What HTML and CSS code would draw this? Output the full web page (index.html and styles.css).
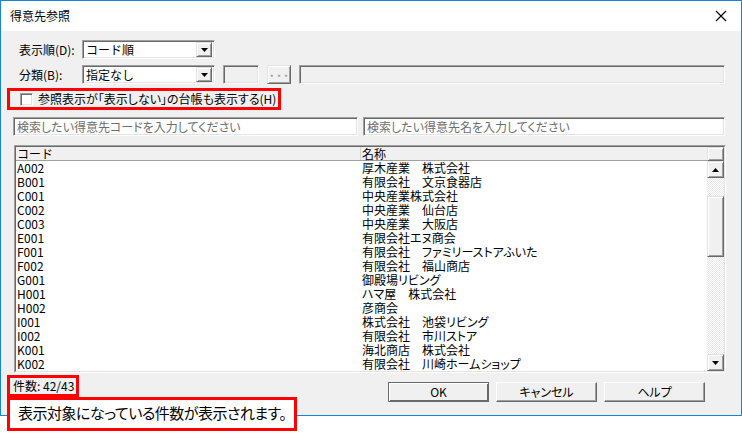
FILE: index.html
```html
<!DOCTYPE html>
<html lang="ja">
<head>
    <meta charset="UTF-8">
    <title>得意先参照</title>
    <link rel="stylesheet" href="styles.css">
</head>
<body>
    <div class="window">
        <!-- Title bar -->
        <div class="titlebar">
            <span class="title">得意先参照</span>
            <svg class="close" width="12" height="12" viewBox="0 0 12 12">
                <path d="M1 1 L11 11 M11 1 L1 11" stroke="#000" stroke-width="1.1" fill="none"/>
            </svg>
        </div>

        <div class="content">
            <div class="form-row">
                <span class="label">表示順(D):</span>
                <div class="select sunken">
                    <span class="select-text">コード順</span>
                    <span class="drop-btn raised"><svg width="7" height="4" viewBox="0 0 7 4"><path d="M0 0 H7 L3.5 4 Z" fill="#000"/></svg></span>
                </div>
            </div>

            <div class="form-row gap-row">
                <span class="label">分類(B):</span>
                <div class="select sunken">
                    <span class="select-text">指定なし</span>
                    <span class="drop-btn raised"><svg width="7" height="4" viewBox="0 0 7 4"><path d="M0 0 H7 L3.5 4 Z" fill="#000"/></svg></span>
                </div>
                <div class="small-box sunken disabled"></div>
                <div class="dots-btn raised">···</div>
                <div class="long-box sunken disabled"></div>
            </div>

            <div class="check-row">
                <span class="checkbox sunken"></span>
                <span class="check-label">参照表示が「表示しない」の台帳も表示する(H)</span>
            </div>

            <div class="search-row">
                <div class="search sunken search-code">検索したい得意先コードを入力してください</div>
                <div class="search sunken search-name">検索したい得意先名を入力してください</div>
            </div>

            <div class="list-outer">
                <div class="list-inner">
                    <div class="list-body">
                        <div class="list-head">
                            <span class="col-code">コード</span>
                            <span class="col-name">名称</span>
                        </div>
                        <div class="list-row"><span class="col-code">A002</span><span class="col-name">厚木産業　株式会社</span></div>
                        <div class="list-row"><span class="col-code">B001</span><span class="col-name">有限会社　文京食器店</span></div>
                        <div class="list-row"><span class="col-code">C001</span><span class="col-name">中央産業株式会社</span></div>
                        <div class="list-row"><span class="col-code">C002</span><span class="col-name">中央産業　仙台店</span></div>
                        <div class="list-row"><span class="col-code">C003</span><span class="col-name">中央産業　大阪店</span></div>
                        <div class="list-row"><span class="col-code">E001</span><span class="col-name">有限会社エヌ商会</span></div>
                        <div class="list-row"><span class="col-code">F001</span><span class="col-name">有限会社　ファミリーストアふいた</span></div>
                        <div class="list-row"><span class="col-code">F002</span><span class="col-name">有限会社　福山商店</span></div>
                        <div class="list-row"><span class="col-code">G001</span><span class="col-name">御殿場リビング</span></div>
                        <div class="list-row"><span class="col-code">H001</span><span class="col-name">ハマ屋　株式会社</span></div>
                        <div class="list-row"><span class="col-code">H002</span><span class="col-name">彦商会</span></div>
                        <div class="list-row"><span class="col-code">I001</span><span class="col-name">株式会社　池袋リビング</span></div>
                        <div class="list-row"><span class="col-code">I002</span><span class="col-name">有限会社　市川ストア</span></div>
                        <div class="list-row"><span class="col-code">K001</span><span class="col-name">海北商店　株式会社</span></div>
                        <div class="list-row"><span class="col-code">K002</span><span class="col-name">有限会社　川崎ホームショップ</span></div>
                    </div>

                    <!-- Scrollbar -->
                    <div class="scroll-col">
                        <div class="scroll-head raised"></div>
                        <div class="scroll-btn raised"><svg width="7" height="4" viewBox="0 0 7 4"><path d="M0 4 H7 L3.5 0 Z" fill="#000"/></svg></div>
                        <div class="track track-top"></div>
                        <div class="thumb raised"></div>
                        <div class="track track-rest"></div>
                        <div class="scroll-btn raised"><svg width="7" height="4" viewBox="0 0 7 4"><path d="M0 0 H7 L3.5 4 Z" fill="#000"/></svg></div>
                    </div>
                </div>
            </div>

            <div class="footer">
                <div class="count-box">件数: 42/43</div>
                <div class="buttons">
                    <div class="btn btn-default">OK</div>
                    <div class="btn">キャンセル</div>
                    <div class="btn">ヘルプ</div>
                </div>
            </div>
        </div>
    </div>

    <!-- Annotation callout -->
    <div class="callout">表示対象になっている件数が表示されます。</div>
</body>
</html>
```

FILE: styles.css
```css
* {
    margin: 0;
    padding: 0;
    box-sizing: border-box;
}

body {
    width: 742px;
    height: 433px;
    background: #fff;
    font-family: "Noto Sans CJK JP", sans-serif;
    font-size: 12px;
    color: #000;
    position: relative;
    overflow: hidden;
}

.window {
    width: 742px;
    height: 416px;
    border: 1px solid #1883d7;
    background: #f0f0f0;
    overflow: hidden;
}

.titlebar {
    height: 30px;
    background: #fff;
    display: flex;
    align-items: center;
    justify-content: space-between;
    padding: 0 14px 0 9px;
}

.title {
    font-size: 12px;
    line-height: 14px;
}

/* 3D borders, classic style */
.sunken {
    border: 1px solid;
    border-color: #a0a0a0 #fff #fff #a0a0a0;
    box-shadow: inset 1px 1px 0 #696969, inset -1px -1px 0 #e3e3e3;
}

.raised {
    border: 1px solid;
    border-color: #e3e3e3 #696969 #696969 #e3e3e3;
    box-shadow: inset 1px 1px 0 #fff, inset -1px -1px 0 #a0a0a0;
    background: #f0f0f0;
}

.content {
    padding: 9px 15px 0 6px;
}

.form-row {
    display: flex;
    align-items: center;
    height: 19px;
    padding-left: 12px;
}

.gap-row {
    margin-top: 6px;
    gap: 8px;
}

.label {
    width: 63px;
    line-height: 14px;
}

.gap-row .label {
    width: 55px;
}

.select {
    width: 133px;
    height: 19px;
    background: #fff;
    display: flex;
    align-items: center;
    justify-content: space-between;
    padding: 2px 2px 2px 3px;
}

.select-text {
    line-height: 14px;
}

.drop-btn {
    width: 16px;
    height: 15px;
    display: flex;
    align-items: center;
    justify-content: center;
}

.disabled {
    background: #f0f0f0;
}

.small-box {
    width: 36px;
    height: 19px;
}

.dots-btn {
    width: 24px;
    height: 19px;
    color: #a0a0a0;
    font-weight: bold;
    display: flex;
    align-items: center;
    justify-content: center;
    line-height: 10px;
}

.long-box {
    width: 426px;
    height: 19px;
}

.check-row {
    margin-top: 4px;
    width: 274px;
    height: 22px;
    border: 3px solid #ff0000;
    display: flex;
    align-items: center;
    padding-left: 10px;
    gap: 5px;
}

.checkbox {
    width: 13px;
    height: 13px;
    background: #fff;
}

.check-label {
    line-height: 14px;
    font-feature-settings: "palt";
}

.search-row {
    margin-top: 7px;
    display: flex;
    gap: 5px;
    padding-left: 6px;
}

.search {
    height: 19px;
    background: #fff;
    color: #6d6d6d;
    line-height: 15px;
    padding: 1px 3px;
    font-feature-settings: "palt";
}

.search-code {
    width: 345px;
}

.search-name {
    width: 362px;
}

.list-outer {
    margin: 9px 0 0 7px;
    width: 712px;
    border: 1px solid;
    border-color: #a0a0a0 #fff #fff #a0a0a0;
}

.list-inner {
    display: flex;
    border: 1px solid;
    border-color: #696969 #e3e3e3 #e3e3e3 #696969;
    background: #fff;
}

.list-body {
    flex: 1;
}

.list-head {
    display: flex;
    height: 14px;
    background: #f0f0f0;
    border-bottom: 1px solid #a0a0a0;
    line-height: 13px;
}

.list-head .col-code {
    border-right: 1px solid #d5d5d5;
}

.list-row {
    display: flex;
    height: 14px;
    line-height: 14px;
}

.col-code {
    width: 345px;
    padding-left: 1px;
}

.col-name {
    padding-left: 1px;
    font-feature-settings: "palt";
}

.scroll-col {
    width: 17px;
    display: flex;
    flex-direction: column;
}

.scroll-head {
    height: 14px;
}

.scroll-btn {
    height: 17px;
    display: flex;
    align-items: center;
    justify-content: center;
}

.track {
    background-color: #fff;
    background-image: conic-gradient(#e6e6e6 25%, #fff 0 50%, #e6e6e6 0 75%, #fff 0);
    background-size: 2px 2px;
}

.track-top {
    height: 18px;
}

.thumb {
    height: 61px;
}

.track-rest {
    flex: 1;
}

.footer {
    margin-top: 2px;
    display: flex;
    align-items: flex-start;
}

.count-box {
    width: 72px;
    height: 22px;
    border: 3px solid #ff0000;
    padding-left: 3px;
    line-height: 16px;
}

.buttons {
    margin: 7px 0 0 309px;
    display: flex;
    gap: 7px;
}

.btn {
    width: 101px;
    height: 20px;
    border: 1px solid;
    border-color: #fff #696969 #696969 #fff;
    box-shadow: inset -1px -1px 0 #a0a0a0;
    background: #f0f0f0;
    display: flex;
    align-items: center;
    justify-content: center;
    line-height: 14px;
    font-feature-settings: "palt";
}

.btn-default {
    border-color: #696969;
    box-shadow: inset 1px 1px 0 #fff, inset -1px -1px 0 #696969;
}

.callout {
    position: absolute;
    left: 7px;
    top: 397px;
    width: 290px;
    height: 34px;
    border: 3px solid #ff0000;
    background: #fff;
    font-size: 15px;
    letter-spacing: -0.5px;
    line-height: 26px;
    padding-left: 8px;
    white-space: nowrap;
    font-feature-settings: "palt";
}
```
